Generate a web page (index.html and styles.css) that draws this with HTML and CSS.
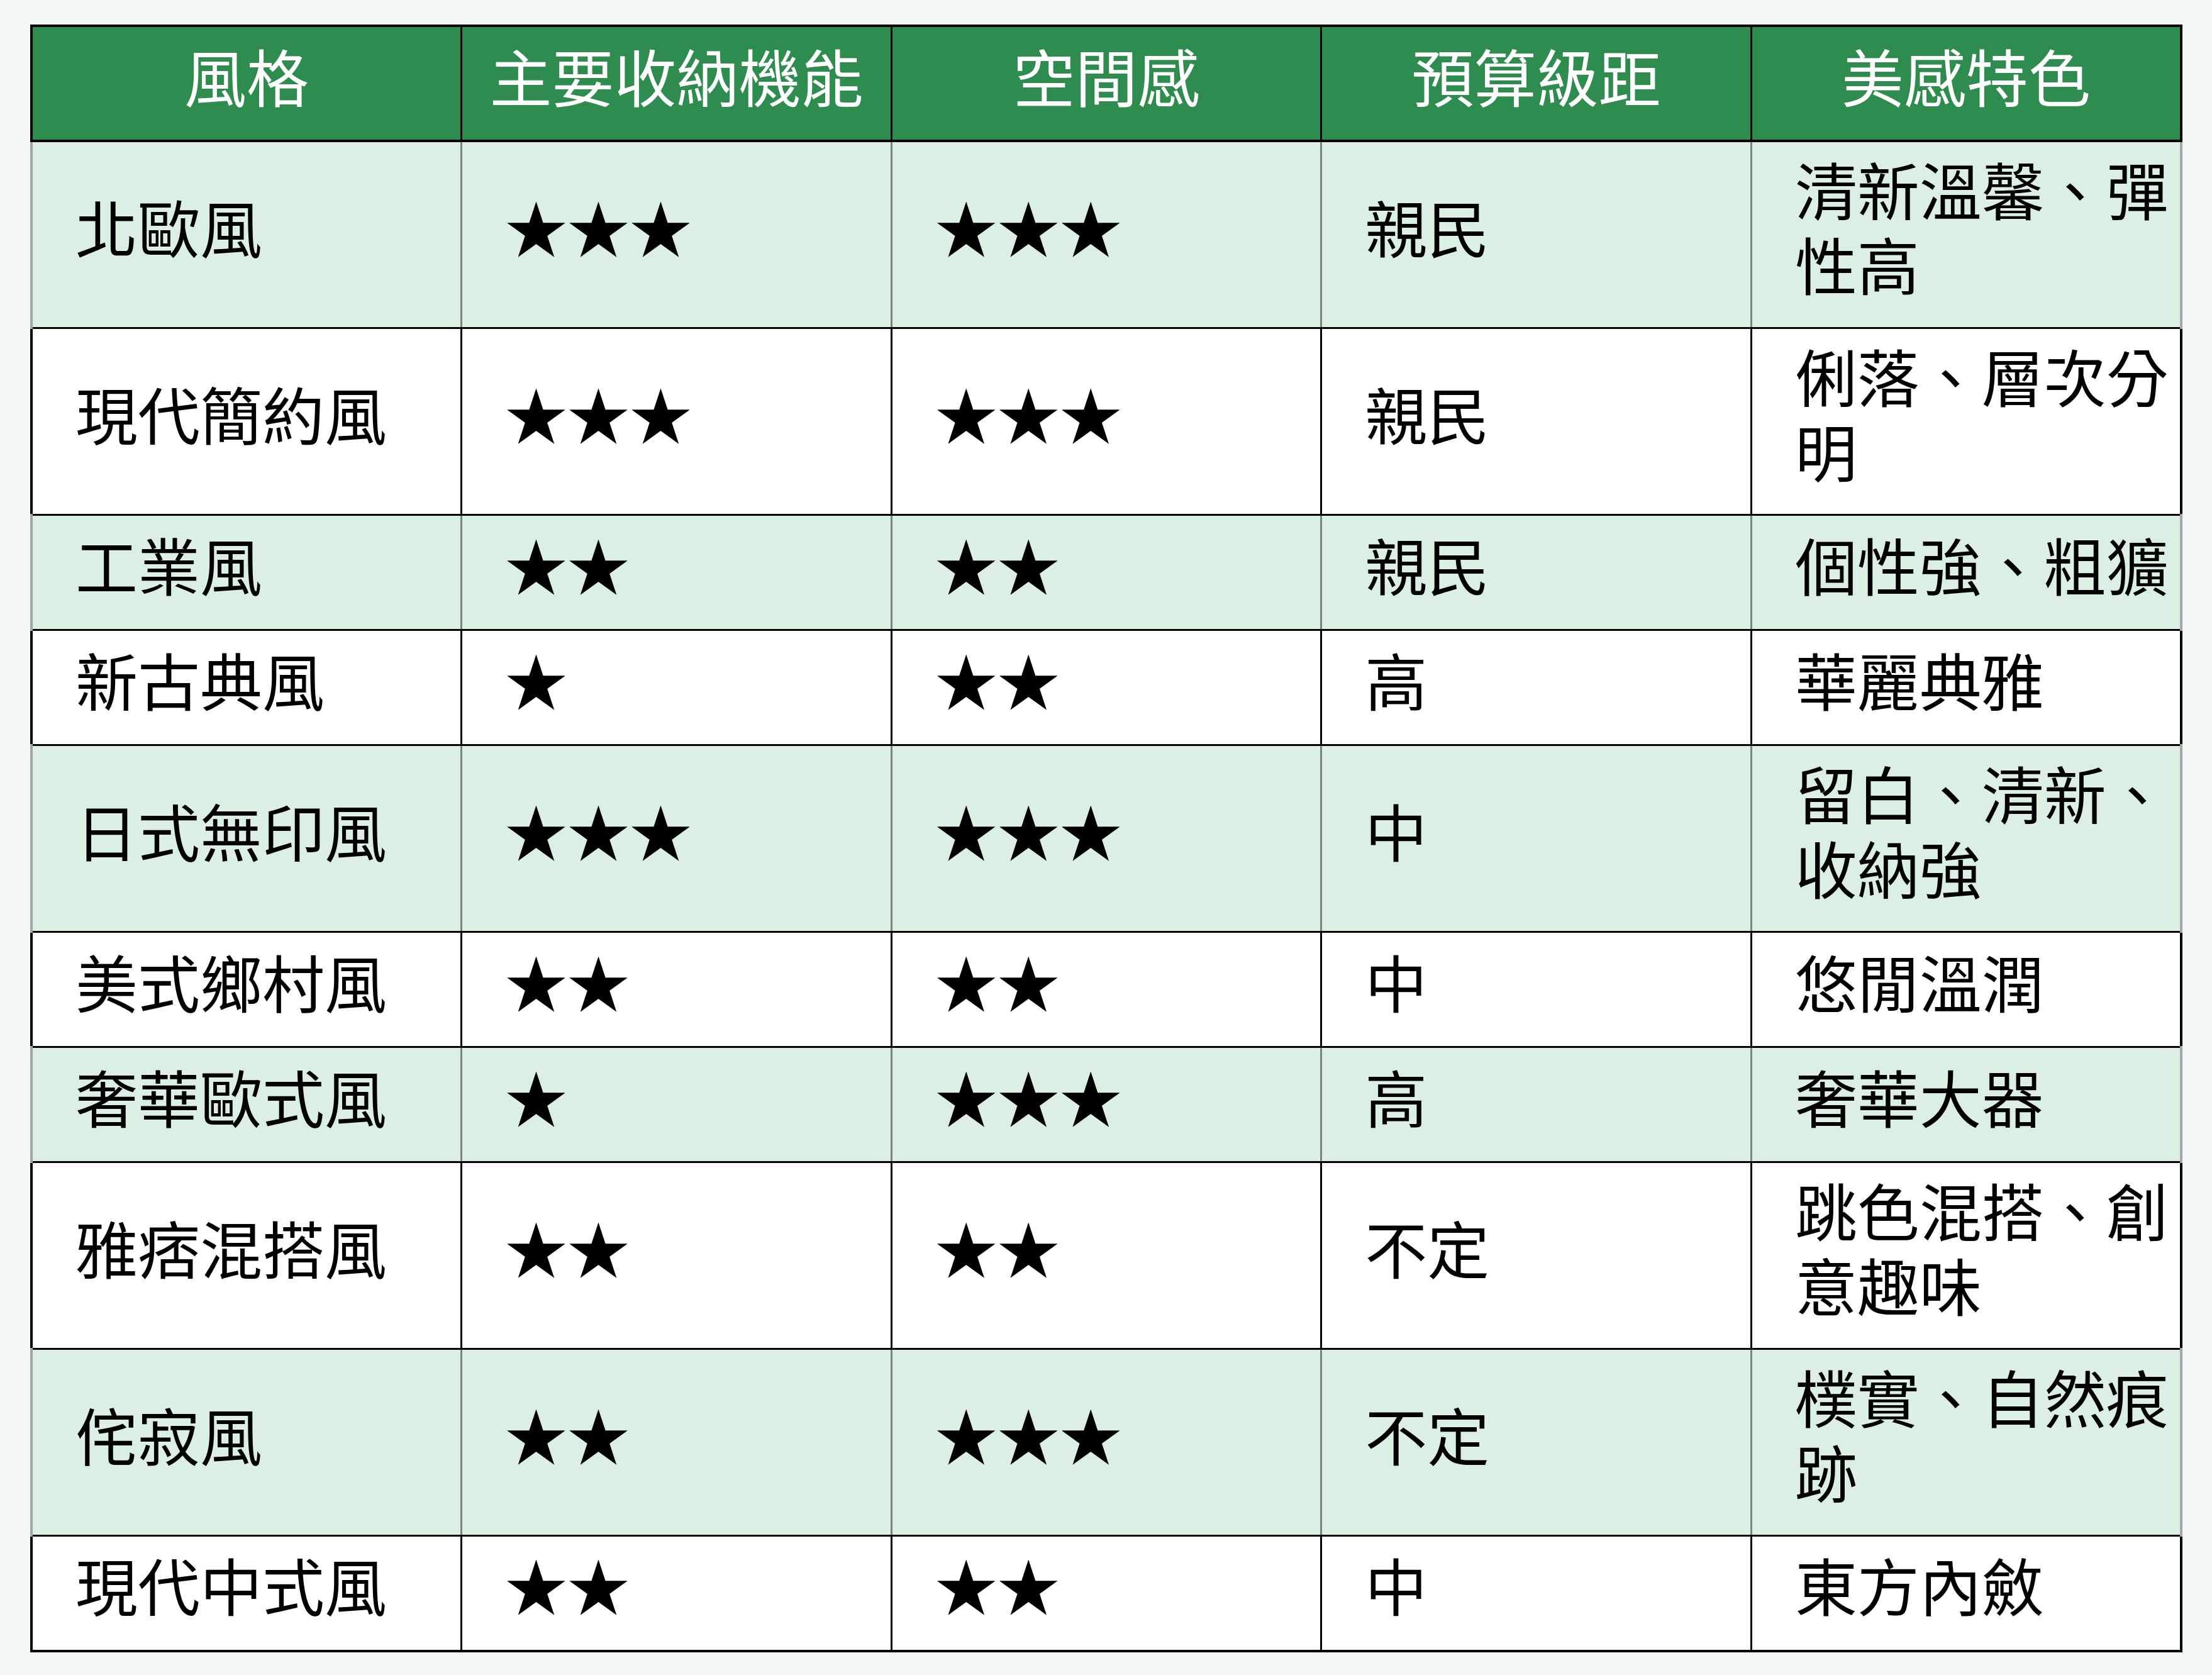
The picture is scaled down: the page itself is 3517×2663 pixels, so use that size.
FILE: index.html
```html
<!DOCTYPE html>
<html lang="zh-Hant">
<head>
<meta charset="utf-8">
<title>風格比較表</title>
<link rel="stylesheet" href="styles.css">
</head>
<body>
<table class="styles-table">
  <thead>
    <tr>
      <th>風格</th>
      <th>主要收納機能</th>
      <th>空間感</th>
      <th>預算級距</th>
      <th>美感特色</th>
    </tr>
  </thead>
  <tbody>
    <tr class="tint"><td>北歐風</td><td>★★★</td><td>★★★</td><td>親民</td><td>清新溫馨、彈性高</td></tr>
    <tr><td>現代簡約風</td><td>★★★</td><td>★★★</td><td>親民</td><td>俐落、層次分明</td></tr>
    <tr class="tint"><td>工業風</td><td>★★</td><td>★★</td><td>親民</td><td>個性強、粗獷</td></tr>
    <tr><td>新古典風</td><td>★</td><td>★★</td><td>高</td><td>華麗典雅</td></tr>
    <tr class="tint"><td>日式無印風</td><td>★★★</td><td>★★★</td><td>中</td><td>留白、清新、收納強</td></tr>
    <tr><td>美式鄉村風</td><td>★★</td><td>★★</td><td>中</td><td>悠閒溫潤</td></tr>
    <tr class="tint"><td>奢華歐式風</td><td>★</td><td>★★★</td><td>高</td><td>奢華大器</td></tr>
    <tr><td>雅痞混搭風</td><td>★★</td><td>★★</td><td>不定</td><td>跳色混搭、創意趣味</td></tr>
    <tr class="tint"><td>侘寂風</td><td>★★</td><td>★★★</td><td>不定</td><td>樸實、自然痕跡</td></tr>
    <tr><td>現代中式風</td><td>★★</td><td>★★</td><td>中</td><td>東方內斂</td></tr>
  </tbody>
</table>
</body>
</html>
```

FILE: styles.css
```css
html, body {
  margin: 0;
  padding: 0;
  background: #f3f7f6;
}

body {
  padding: 39px 0 0 48px;
  font-family: "Noto Sans CJK TC", "Noto Sans CJK SC", "Noto Sans", sans-serif;
  color: #000;
}

.styles-table {
  border-collapse: collapse;
  table-layout: fixed;
  width: 3422px;
  border: 4px solid #000;
  background: #fff;
}

.styles-table th,
.styles-table td {
  border: 3px solid #000;
  font-size: 99px;
  line-height: 119px;
  vertical-align: middle;
  text-align: left;
  word-break: normal;
}

.styles-table th {
  background: #2e8c4e;
  color: #fff;
  font-weight: 400;
  text-align: center;
  padding: 17px 0 43px;
  border-bottom: 4px solid #000;
}

.styles-table td {
  padding: 14px 10px 42px 68px;
  font-weight: 400;
}

.styles-table tbody tr {
  height: 183px;
}

.styles-table tr.tint td {
  background: #dbefe2;
  border-left-color: #7a857d;
  border-right-color: #7a857d;
}

.styles-table tr.tint td:first-child {
  border-left: 4px solid #a3a7a4;
}

.styles-table tr.tint td:last-child {
  border-right: 4px solid #a5a8a6;
}
```
